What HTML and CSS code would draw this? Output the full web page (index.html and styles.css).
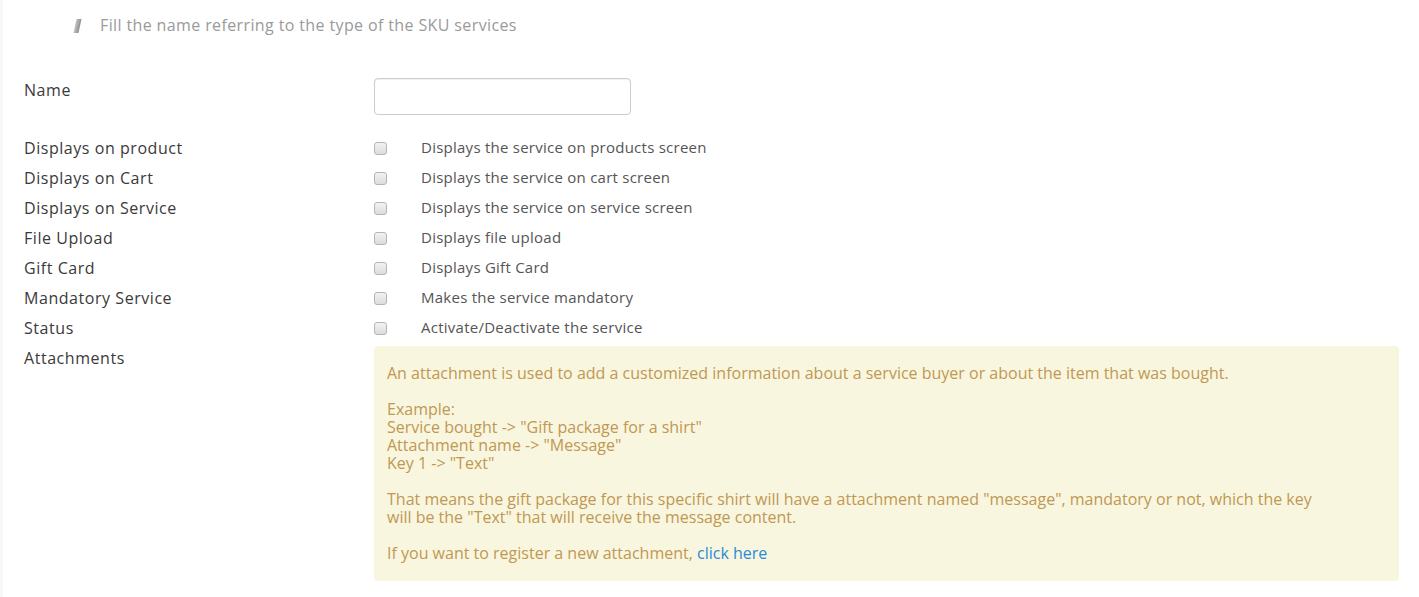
FILE: index.html
```html
<!DOCTYPE html>
<html>
<head>
<meta charset="utf-8">
<link rel="stylesheet" href="styles.css">
</head>
<body>
<div class="page">
  <div class="hint">
    <span class="hint-icon"></span>
    <span class="hint-text">Fill the name referring to the type of the SKU services</span>
  </div>
  <div class="form">
    <div class="row row-name">
      <div class="label">Name</div>
      <div class="control"><input class="text-input" type="text"></div>
    </div>
    <div class="row">
      <div class="label">Displays on product</div>
      <div class="control check"><span class="box"></span><span class="desc">Displays the service on products screen</span></div>
    </div>
    <div class="row">
      <div class="label">Displays on Cart</div>
      <div class="control check"><span class="box"></span><span class="desc">Displays the service on cart screen</span></div>
    </div>
    <div class="row">
      <div class="label">Displays on Service</div>
      <div class="control check"><span class="box"></span><span class="desc">Displays the service on service screen</span></div>
    </div>
    <div class="row">
      <div class="label">File Upload</div>
      <div class="control check"><span class="box"></span><span class="desc">Displays file upload</span></div>
    </div>
    <div class="row">
      <div class="label">Gift Card</div>
      <div class="control check"><span class="box"></span><span class="desc">Displays Gift Card</span></div>
    </div>
    <div class="row">
      <div class="label">Mandatory Service</div>
      <div class="control check"><span class="box"></span><span class="desc">Makes the service mandatory</span></div>
    </div>
    <div class="row">
      <div class="label">Status</div>
      <div class="control check"><span class="box"></span><span class="desc">Activate/Deactivate the service</span></div>
    </div>
    <div class="row row-attach">
      <div class="label">Attachments</div>
      <div class="control">
        <div class="alert">
          <p>An attachment is used to add a customized information about a service buyer or about the item that was bought.</p>
          <p>Example:<br>Service bought -&gt; "Gift package for a shirt"<br>Attachment name -&gt; "Message"<br>Key 1 -&gt; "Text"</p>
          <p>That means the gift package for this specific shirt will have a attachment named "message", mandatory or not, which the key will be the "Text" that will receive the message content.</p>
          <p>If you want to register a new attachment, <a href="#">click here</a></p>
        </div>
      </div>
    </div>
  </div>
</div>
</body>
</html>
```

FILE: styles.css
```css
html, body {
  margin: 0;
  padding: 0;
  background: #ffffff;
}
body {
  font-family: "Open Sans", "Liberation Sans", sans-serif;
  color: #333333;
}
.page {
  border-left: 3px solid #f8f8f8;
  min-height: 597px;
  box-sizing: border-box;
  padding: 10px 20px 0 21px;
}
.hint {
  display: flex;
  align-items: center;
  height: 30px;
  padding-left: 51px;
}
.hint-icon {
  width: 5px;
  height: 14px;
  background: linear-gradient(90deg, #c4c4c4, #8f8f8f);
  transform: skewX(-12deg);
  margin-right: 20px;
  margin-top: 2px;
}
.hint-text {
  font-size: 16px;
  letter-spacing: 0.38px;
  color: #9a9a9a;
}
.form {
  margin-top: 35px;
}
.row {
  display: grid;
  grid-template-columns: 350px 1fr;
  align-items: start;
  min-height: 30px;
}
.label {
  font-size: 16px;
  letter-spacing: 0.55px;
  line-height: 30px;
  color: #3a3a3a;
}
.row-name {
  margin-bottom: 18px;
}
.text-input {
  margin-top: 3px;
  width: 257px;
  height: 37px;
  box-sizing: border-box;
  border: 1px solid #cccccc;
  border-radius: 4px;
  box-shadow: inset 0 1px 1px rgba(0,0,0,0.06);
  padding: 4px 8px;
  font: inherit;
  outline: none;
}
.check {
  display: flex;
  align-items: center;
  height: 30px;
}
.box {
  width: 11px;
  height: 11px;
  border: 1px solid #b5b5b5;
  border-radius: 3px;
  background: linear-gradient(#f2f2f2, #dcdcdc);
  margin-right: 34px;
  margin-top: 1px;
}
.desc {
  font-size: 15px;
  letter-spacing: 0.25px;
  color: #555555;
  margin-top: -3px;
}
.alert {
  margin-top: 3px;
  background: #f9f6df;
  border-radius: 4px;
  padding: 18px 70px 19px 13px;
  color: #c09853;
  font-size: 16px;
  line-height: 18px;
}
.alert p {
  margin: 0 0 18px;
}
.alert p:last-child {
  margin-bottom: 0;
}
.alert a {
  color: #2a8ad6;
  text-decoration: none;
}
```
